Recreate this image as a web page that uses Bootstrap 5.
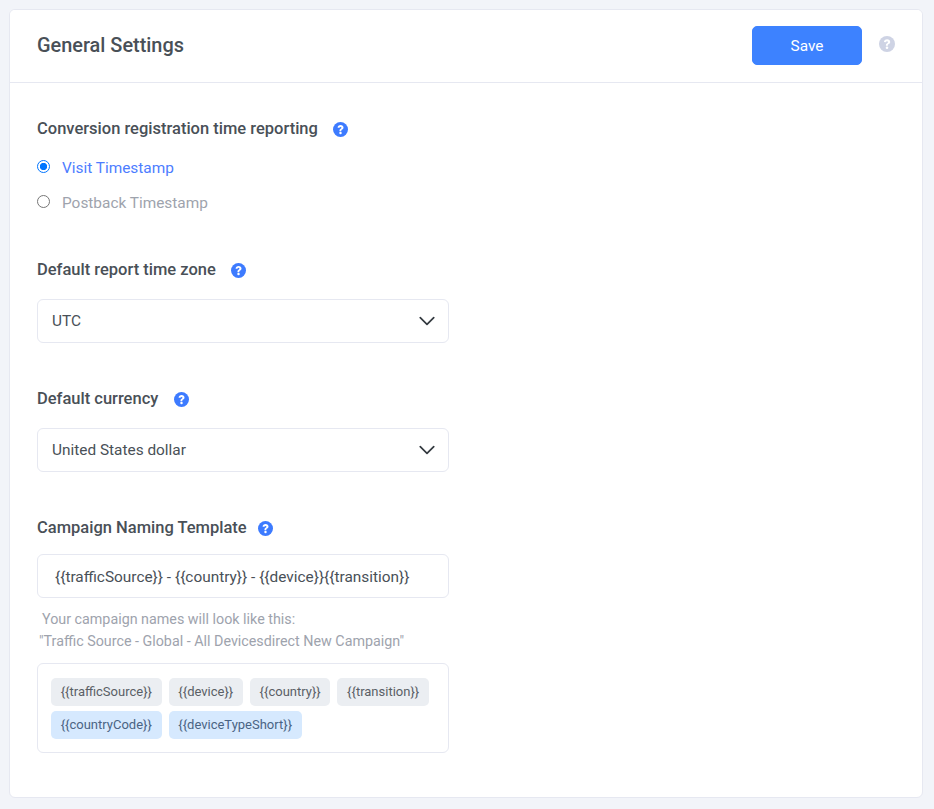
<!DOCTYPE html>
<html lang="en">
  <head>
    <meta charset="UTF-8" />
    <meta name="viewport" content="width=device-width, initial-scale=1.0" />
    <title>General Settings</title>
    <link
      href="https://cdn.jsdelivr.net/npm/bootstrap@5.3.0/dist/css/bootstrap.min.css"
      rel="stylesheet"
    />
    <style>
      html, body { height: 100%; }
      body {
        background: #f2f4f9;
        font-family: Roboto, "Liberation Sans", sans-serif;
        font-size: 15.4px;
        color: #495057;
        padding: 9px 11px 11px 9px;
      }
      .settings-card {
        border: 1px solid #e6e8f1;
        border-radius: 6px;
        height: 789px;
      }
      .settings-card .card-header {
        background: #fff;
        border-bottom: 1px solid #e6e8f1;
        height: 73px;
        padding: 0 27px;
      }
      .settings-title { font-size: 19.9px; font-weight: 500; color: #495057; margin: 0; }
      .save-btn {
        width: 110px;
        height: 39px;
        background: #3d82ff;
        border-color: #3d82ff;
        border-radius: 5px;
        font-size: 15.4px;
        font-weight: 400;
        margin-right: 17px;
        margin-bottom: 2px;
        padding-top: 8px;
        padding-bottom: 6px;
      }
      .settings-body { padding: 36px 27px 0; width: 466px; flex: none; }
      .field-label { font-size: 16.5px; font-weight: 500; color: #495057; line-height: 20px; margin: 0; }
      .hint-icon { width: 15px; height: 15px; flex: none; display: block; color: #3d7bff; }
      .hint-muted { width: 16px; height: 16px; color: #ced3e4; margin-top: -5px; }
      .label-row { gap: 15.5px; margin-top: 46px; }
      .label-row-first { margin-top: 0; margin-bottom: 19px; }
      .label-row-tight { gap: 11px; }
      .radio-row { margin: 0; min-height: 0; line-height: 20px; padding-left: 25px; font-size: 15.4px; }
      .radio-row .form-check-input { width: 13px; height: 13px; margin-top: 2px; margin-left: -25px; border-color: #767676; }
      .radio-row .form-check-input:checked {
        background-color: #fff;
        background-image: radial-gradient(circle, #0075ff 0 3.4px, #fff 3.9px);
        border: 1.5px solid #0075ff;
      }
      .radio-on { color: #4d7dff; margin-bottom: 15px; }
      .radio-off { color: #9ea3ad; margin-bottom: 47px; }
      .settings-body .form-select,
      .settings-body .form-control {
        height: 44px;
        border: 1px solid #e6e8f1;
        border-radius: 6px;
        font-size: 15.4px;
        color: #495057;
        padding-top: 8px;
        padding-bottom: 6px;
      }
      .settings-body .form-select {
        margin-top: 19px;
        padding-left: 14px;
        background-image: url("data:image/svg+xml,%3csvg xmlns='http://www.w3.org/2000/svg' viewBox='0 0 16 16'%3e%3cpath fill='none' stroke='%23343a40' stroke-linecap='round' stroke-linejoin='round' stroke-width='1.5' d='m2 5 6 6 6-6'/%3e%3c/svg%3e");
        background-position: right 12px top 12px;
        background-size: 18px 18px;
      }
      .settings-body .form-control { margin-top: 16px; padding-left: 17px; padding-right: 4px; }
      .name-preview { color: #9ea3ad; font-size: 14.3px; line-height: 22px; margin: 10px 0 11px 2px; }
      .name-preview span { display: block; }
      .name-preview .first-line { padding-left: 3px; }
      .token-box {
        border: 1px solid #e6e8f1;
        border-radius: 6px;
        padding: 14px 13px 12px;
        height: 90px;
        column-gap: 7px;
        row-gap: 5px;
        align-content: flex-start;
      }
      .token {
        font-size: 13px;
        line-height: 28px;
        height: 28px;
        padding: 0 9.7px;
        border-radius: 5px;
        background: #ebeef2;
        color: #5a5f66;
      }
      .token-blue { background: #d6e9fe; color: #4a6484; }
    </style>
  </head>
  <body>
    <svg width="0" height="0" class="d-block" aria-hidden="true">
      <symbol id="hint" viewBox="0 0 16 16">
        <circle cx="8" cy="8" r="8" fill="currentColor" />
        <path d="M4.9 6.1C5 4.4 6.3 3.3 8.1 3.3c1.8 0 3.1 1 3.1 2.6 0 1.1-.6 1.7-1.4 2.2-.7.4-.9.7-.9 1.4v.3H6.9v-.5c0-1.1.4-1.6 1.2-2.1.6-.4.9-.7.9-1.2 0-.5-.4-.8-1-.8-.6 0-1 .4-1.1 1z" fill="#fff" />
        <circle cx="8" cy="11.8" r="1.3" fill="#fff" />
      </symbol>
    </svg>
    <div class="card settings-card">
      <div class="card-header d-flex align-items-center justify-content-between">
        <h1 class="settings-title">General Settings</h1>
        <div class="d-flex align-items-center">
          <button type="button" class="btn btn-primary save-btn">Save</button>
          <svg class="hint-icon hint-muted"><use href="#hint" /></svg>
        </div>
      </div>
      <div class="settings-body">
        <div class="d-flex align-items-center label-row label-row-first">
          <label class="field-label">Conversion registration time reporting</label>
          <svg class="hint-icon"><use href="#hint" /></svg>
        </div>
        <div class="form-check radio-row radio-on">
          <input class="form-check-input" type="radio" name="tsMode" id="tsVisit" checked />
          <label class="form-check-label" for="tsVisit">Visit Timestamp</label>
        </div>
        <div class="form-check radio-row radio-off">
          <input class="form-check-input" type="radio" name="tsMode" id="tsPostback" />
          <label class="form-check-label" for="tsPostback">Postback Timestamp</label>
        </div>

        <div class="d-flex align-items-center label-row">
          <label class="field-label">Default report time zone</label>
          <svg class="hint-icon"><use href="#hint" /></svg>
        </div>
        <select class="form-select"><option>UTC</option></select>

        <div class="d-flex align-items-center label-row">
          <label class="field-label">Default currency</label>
          <svg class="hint-icon"><use href="#hint" /></svg>
        </div>
        <select class="form-select"><option>United States dollar</option></select>

        <div class="d-flex align-items-center label-row label-row-tight">
          <label class="field-label">Campaign Naming Template</label>
          <svg class="hint-icon"><use href="#hint" /></svg>
        </div>
        <input class="form-control" type="text" value="{{trafficSource}} - {{country}} - {{device}}{{transition}}" />
        <div class="name-preview">
          <span class="first-line">Your campaign names will look like this:</span>
          <span>"Traffic Source - Global - All Devicesdirect New Campaign"</span>
        </div>
        <div class="token-box d-flex flex-wrap">
          <span class="token">{{trafficSource}}</span>
          <span class="token">{{device}}</span>
          <span class="token">{{country}}</span>
          <span class="token">{{transition}}</span>
          <span class="token token-blue">{{countryCode}}</span>
          <span class="token token-blue">{{deviceTypeShort}}</span>
        </div>
      </div>
    </div>
  </body>
</html>
